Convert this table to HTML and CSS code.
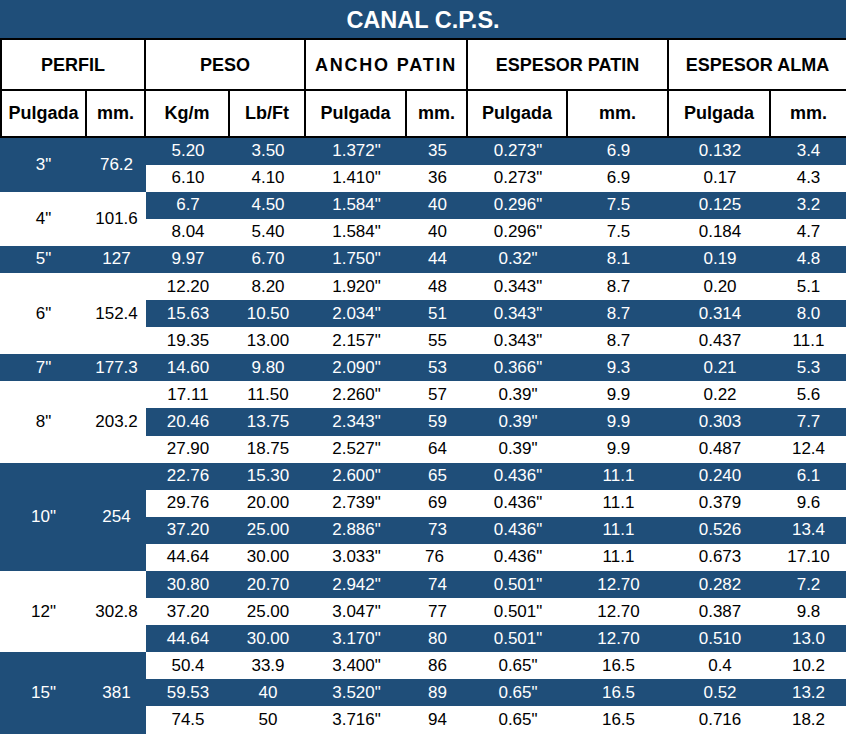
FILE: index.html
```html
<!DOCTYPE html>
<html lang="es">
<head>
<meta charset="utf-8">
<title>Canal C.P.S.</title>
<link rel="stylesheet" href="styles.css">
</head>
<body>
<div class="sheet">
  <div class="title">CANAL C.P.S.</div>

  <div class="h first span2">PERFIL</div>
  <div class="h span2">PESO</div>
  <div class="h span2 wide">ANCHO PATIN</div>
  <div class="h span2">ESPESOR PATIN</div>
  <div class="h span2 last">ESPESOR ALMA</div>

  <div class="s first">Pulgada</div>
  <div class="s">mm.</div>
  <div class="s">Kg/m</div>
  <div class="s">Lb/Ft</div>
  <div class="s">Pulgada</div>
  <div class="s">mm.</div>
  <div class="s">Pulgada</div>
  <div class="s">mm.</div>
  <div class="s">Pulgada</div>
  <div class="s last">mm.</div>

  <div class="row b">
    <div class="p b r2">3"</div><div class="p b r2">76.2</div>
    <div class="c">5.20</div><div class="c">3.50</div><div class="c">1.372"</div><div class="c">35</div><div class="c">0.273"</div><div class="c">6.9</div><div class="c">0.132</div><div class="c">3.4</div>
  </div>
  <div class="row w">
    <div class="c">6.10</div><div class="c">4.10</div><div class="c">1.410"</div><div class="c">36</div><div class="c">0.273"</div><div class="c">6.9</div><div class="c">0.17</div><div class="c">4.3</div>
  </div>
  <div class="row b">
    <div class="p w r2">4"</div><div class="p w r2">101.6</div>
    <div class="c">6.7</div><div class="c">4.50</div><div class="c">1.584"</div><div class="c">40</div><div class="c">0.296"</div><div class="c">7.5</div><div class="c">0.125</div><div class="c">3.2</div>
  </div>
  <div class="row w">
    <div class="c">8.04</div><div class="c">5.40</div><div class="c">1.584"</div><div class="c">40</div><div class="c">0.296"</div><div class="c">7.5</div><div class="c">0.184</div><div class="c">4.7</div>
  </div>
  <div class="row b">
    <div class="p b">5"</div><div class="p b">127</div>
    <div class="c">9.97</div><div class="c">6.70</div><div class="c">1.750"</div><div class="c">44</div><div class="c">0.32"</div><div class="c">8.1</div><div class="c">0.19</div><div class="c">4.8</div>
  </div>
  <div class="row w">
    <div class="p w r3">6"</div><div class="p w r3">152.4</div>
    <div class="c">12.20</div><div class="c">8.20</div><div class="c">1.920"</div><div class="c">48</div><div class="c">0.343"</div><div class="c">8.7</div><div class="c">0.20</div><div class="c">5.1</div>
  </div>
  <div class="row b">
    <div class="c">15.63</div><div class="c">10.50</div><div class="c">2.034"</div><div class="c">51</div><div class="c">0.343"</div><div class="c">8.7</div><div class="c">0.314</div><div class="c">8.0</div>
  </div>
  <div class="row w">
    <div class="c">19.35</div><div class="c">13.00</div><div class="c">2.157"</div><div class="c">55</div><div class="c">0.343"</div><div class="c">8.7</div><div class="c">0.437</div><div class="c">11.1</div>
  </div>
  <div class="row b">
    <div class="p b">7"</div><div class="p b">177.3</div>
    <div class="c">14.60</div><div class="c">9.80</div><div class="c">2.090"</div><div class="c">53</div><div class="c">0.366"</div><div class="c">9.3</div><div class="c">0.21</div><div class="c">5.3</div>
  </div>
  <div class="row w">
    <div class="p w r3">8"</div><div class="p w r3">203.2</div>
    <div class="c">17.11</div><div class="c">11.50</div><div class="c">2.260"</div><div class="c">57</div><div class="c">0.39"</div><div class="c">9.9</div><div class="c">0.22</div><div class="c">5.6</div>
  </div>
  <div class="row b">
    <div class="c">20.46</div><div class="c">13.75</div><div class="c">2.343"</div><div class="c">59</div><div class="c">0.39"</div><div class="c">9.9</div><div class="c">0.303</div><div class="c">7.7</div>
  </div>
  <div class="row w">
    <div class="c">27.90</div><div class="c">18.75</div><div class="c">2.527"</div><div class="c">64</div><div class="c">0.39"</div><div class="c">9.9</div><div class="c">0.487</div><div class="c">12.4</div>
  </div>
  <div class="row b">
    <div class="p b r4">10"</div><div class="p b r4">254</div>
    <div class="c">22.76</div><div class="c">15.30</div><div class="c">2.600"</div><div class="c">65</div><div class="c">0.436"</div><div class="c">11.1</div><div class="c">0.240</div><div class="c">6.1</div>
  </div>
  <div class="row w">
    <div class="c">29.76</div><div class="c">20.00</div><div class="c">2.739"</div><div class="c">69</div><div class="c">0.436"</div><div class="c">11.1</div><div class="c">0.379</div><div class="c">9.6</div>
  </div>
  <div class="row b">
    <div class="c">37.20</div><div class="c">25.00</div><div class="c">2.886"</div><div class="c">73</div><div class="c">0.436"</div><div class="c">11.1</div><div class="c">0.526</div><div class="c">13.4</div>
  </div>
  <div class="row w">
    <div class="c">44.64</div><div class="c">30.00</div><div class="c">3.033"</div><div class="c nudge">76</div><div class="c">0.436"</div><div class="c">11.1</div><div class="c">0.673</div><div class="c">17.10</div>
  </div>
  <div class="row b">
    <div class="p w r3">12"</div><div class="p w r3">302.8</div>
    <div class="c">30.80</div><div class="c">20.70</div><div class="c">2.942"</div><div class="c">74</div><div class="c">0.501"</div><div class="c">12.70</div><div class="c">0.282</div><div class="c">7.2</div>
  </div>
  <div class="row w">
    <div class="c">37.20</div><div class="c">25.00</div><div class="c">3.047"</div><div class="c">77</div><div class="c">0.501"</div><div class="c">12.70</div><div class="c">0.387</div><div class="c">9.8</div>
  </div>
  <div class="row b">
    <div class="c">44.64</div><div class="c">30.00</div><div class="c">3.170"</div><div class="c">80</div><div class="c">0.501"</div><div class="c">12.70</div><div class="c">0.510</div><div class="c">13.0</div>
  </div>
  <div class="row w">
    <div class="p b r3">15"</div><div class="p b r3">381</div>
    <div class="c">50.4</div><div class="c">33.9</div><div class="c">3.400"</div><div class="c">86</div><div class="c">0.65"</div><div class="c">16.5</div><div class="c">0.4</div><div class="c">10.2</div>
  </div>
  <div class="row b">
    <div class="c">59.53</div><div class="c">40</div><div class="c">3.520"</div><div class="c">89</div><div class="c">0.65"</div><div class="c">16.5</div><div class="c">0.52</div><div class="c">13.2</div>
  </div>
  <div class="row w">
    <div class="c">74.5</div><div class="c">50</div><div class="c">3.716"</div><div class="c">94</div><div class="c">0.65"</div><div class="c">16.5</div><div class="c">0.716</div><div class="c">18.2</div>
  </div>
</div>
</body>
</html>
```

FILE: styles.css
```css
html, body {
  margin: 0;
  padding: 0;
  background: #ffffff;
}

.sheet {
  width: 846px;
  display: grid;
  grid-template-columns: 87px 59px 84px 76px 101px 61px 100px 101px 102px 75px;
  grid-template-rows: 38px 53px 46.5px repeat(22, 27.1px);
  font-family: "Liberation Sans", Arial, sans-serif;
  color: #000000;
}

.title {
  grid-column: 1 / -1;
  background: #1f4e79;
  color: #ffffff;
  font-weight: bold;
  font-size: 23.5px;
  display: flex;
  align-items: center;
  justify-content: center;
  padding-top: 3px;
  box-sizing: border-box;
}

.h, .s {
  box-sizing: border-box;
  background: #ffffff;
  font-weight: bold;
  font-size: 18px;
  display: flex;
  align-items: center;
  justify-content: center;
  border-right: 2px solid #000000;
  border-bottom: 2px solid #000000;
}

.h {
  border-top: 2px solid #000000;
  padding-top: 1px;
}

.wide {
  letter-spacing: 1.8px;
}

.span2 {
  grid-column: span 2;
}

.first {
  border-left: 2px solid #000000;
}

.last {
  border-right: 0;
}

.row {
  display: contents;
}

.c, .p {
  display: flex;
  align-items: center;
  justify-content: center;
  font-size: 17px;
}

.row.b > .c {
  background: #1f4e79;
  color: #ffffff;
}

.row.w > .c {
  background: #ffffff;
  color: #000000;
}

.p.b {
  background: #1f4e79;
  color: #ffffff;
}

.p.w {
  background: #ffffff;
  color: #000000;
}

.r2 { grid-row: span 2; }
.r3 { grid-row: span 3; }
.r4 { grid-row: span 4; }

.nudge {
  justify-content: flex-start;
  padding-left: 18px;
}
```
